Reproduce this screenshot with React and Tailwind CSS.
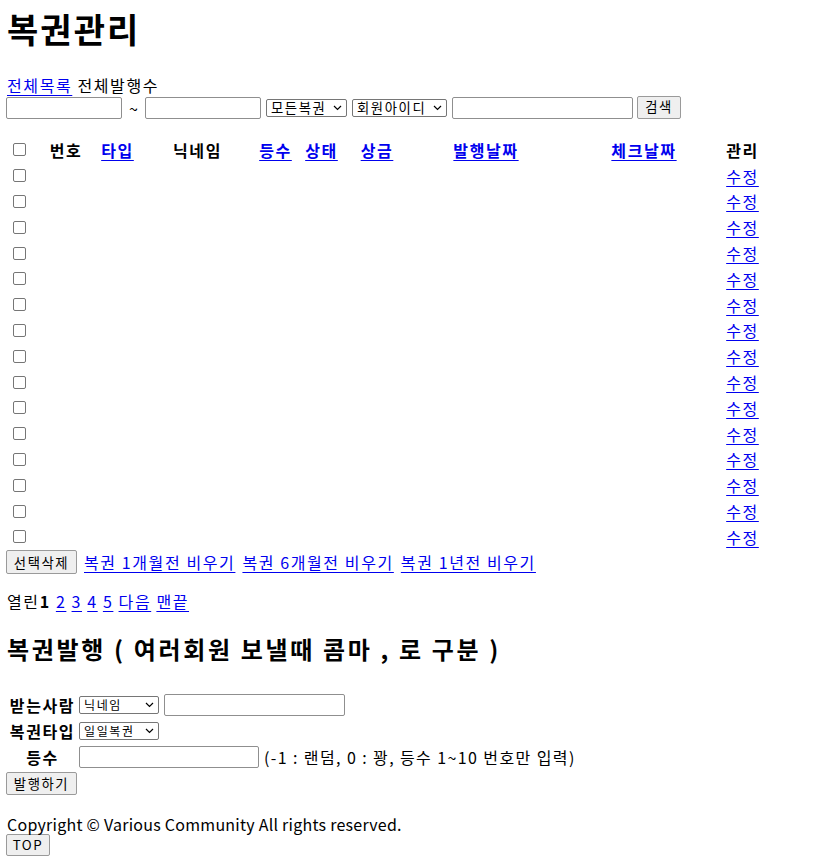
import React from "react";

const Chevron = () => (
  <svg width="9" height="6" viewBox="0 0 9 6" className="shrink-0">
    <path d="M1 1 L4.5 4.5 L8 1" fill="none" stroke="#000" strokeWidth="1.2" />
  </svg>
);

const Select = ({ label, w, size = "text-[13.33px]" }) => (
  <div
    className={`${w} h-[18px] flex items-center justify-between border border-[#767676] rounded-[2px] bg-white pl-[4px] pr-[4px] ${size} leading-none text-black`}
  >
    <span>{label}</span>
    <Chevron />
  </div>
);

const Input = ({ w }) => (
  <div className={`${w} h-[22px] border border-[#8f8f8f] rounded-[2px] bg-white`} />
);

const Button = ({ children, w, h = "h-[23px]" }) => (
  <div
    className={`${w} ${h} flex items-center justify-center border border-[#9a9a9a] rounded-[2px] bg-[#efefef] text-[13.33px] leading-none text-black`}
  >
    {children}
  </div>
);

const Check = () => (
  <div className="w-[13px] h-[13px] border border-[#767676] rounded-[2px] bg-white" />
);

const A = ({ children, className = "" }) => (
  <span className={`text-[#0000ee] underline underline-offset-[3px] ${className}`}>{children}</span>
);

const cols = "grid-cols-[27px_66px_37px_123px_33px_59px_52px_166px_150px_47px]";

export default function App() {
  const rows = Array.from({ length: 15 });
  return (
    <div className="bg-white min-h-[865px] px-[6px] text-black text-[16px] tracking-[0.1em] font-['Noto_Sans_CJK_KR','Noto_Sans',sans-serif]">
      <h1 className="pt-[10px] h-[47px] text-[34px] leading-[37px] font-bold pl-[1px] tracking-[0.06em]">복권관리</h1>

      <div className="mt-[28px] h-[20px] leading-[20px] pl-[1px]">
        <A>전체목록</A> 전체발행수
      </div>

      <div className="mt-[1px] h-[24px] flex items-center">
        <Input w="w-[116px]" />
        <span className="w-[23px] text-center leading-none tracking-normal">~</span>
        <Input w="w-[116px]" />
        <div className="ml-[5px]">
          <Select label="모든복권" w="w-[81px]" />
        </div>
        <div className="ml-[5px]">
          <Select label="회원아이디" w="w-[95px]" />
        </div>
        <div className="ml-[5px]">
          <Input w="w-[181px]" />
        </div>
        <div className="ml-[4px] -mt-[2px]">
          <Button w="w-[44px]">검색</Button>
        </div>
      </div>

      <div className={`mt-[17px] grid ${cols} auto-rows-[25.8px] items-center text-center`}>
        <div className="flex justify-center">
          <Check />
        </div>
        <div className="font-bold">번호</div>
        <div className="font-bold">
          <A>타입</A>
        </div>
        <div className="font-bold">닉네임</div>
        <div className="font-bold">
          <A>등수</A>
        </div>
        <div className="font-bold">
          <A>상태</A>
        </div>
        <div className="font-bold">
          <A>상금</A>
        </div>
        <div className="font-bold">
          <A>발행날짜</A>
        </div>
        <div className="font-bold">
          <A>체크날짜</A>
        </div>
        <div className="font-bold">관리</div>
        {rows.map((_, i) => (
          <React.Fragment key={i}>
            <div className="flex justify-center">
              <Check />
            </div>
            <div />
            <div />
            <div />
            <div />
            <div />
            <div />
            <div />
            <div />
            <div>
              <A>수정</A>
            </div>
          </React.Fragment>
        ))}
      </div>

      <div className="h-[25px] flex items-center gap-[7px]">
        <Button w="w-[71px]" h="h-[24px]">선택삭제</Button>
        <A>복권 1개월전 비우기</A>
        <A>복권 6개월전 비우기</A>
        <A>복권 1년전 비우기</A>
      </div>

      <div className="mt-[16px] h-[20px] leading-[20px] pl-[1px]">
        열린<b>1</b> <A>2</A> <A>3</A> <A>4</A> <A>5</A> <A>다음</A> <A>맨끝</A>
      </div>

      <h2 className="mt-[24px] h-[28px] leading-[28px] text-[24px] font-bold pl-[1px] tracking-[0.11em]">
        복권발행 ( 여러회원 보낼때 콤마 , 로 구분 )
      </h2>

      <div className="mt-[31px] grid grid-cols-[73px_auto] gap-y-[4px] items-center">
        <div className="font-bold text-center leading-[22px]">받는사람</div>
        <div className="flex items-center gap-[5px]">
          <Select label="닉네임" w="w-[80px]" size="text-[12px]" />
          <Input w="w-[181px]" />
        </div>
        <div className="font-bold text-center leading-[22px]">복권타입</div>
        <div className="flex items-center">
          <Select label="일일복권" w="w-[80px]" size="text-[12px]" />
        </div>
        <div className="font-bold text-center leading-[22px]">등수</div>
        <div className="flex items-center gap-[5px]">
          <Input w="w-[180px]" />
          <span className="leading-[22px] tracking-[1.4px]">(-1 : 랜덤, 0 : 꽝, 등수 1~10 번호만 입력)</span>
        </div>
      </div>

      <div className="mt-[4px]">
        <Button w="w-[71px]">발행하기</Button>
      </div>

      <div className="mt-[19px] h-[20px] leading-[20px] pl-[1px] tracking-[0.25px]">
        Copyright © Various Community All rights reserved.
      </div>
      <div>
        <Button w="w-[44px]" h="h-[22px]">TOP</Button>
      </div>
    </div>
  );
}
